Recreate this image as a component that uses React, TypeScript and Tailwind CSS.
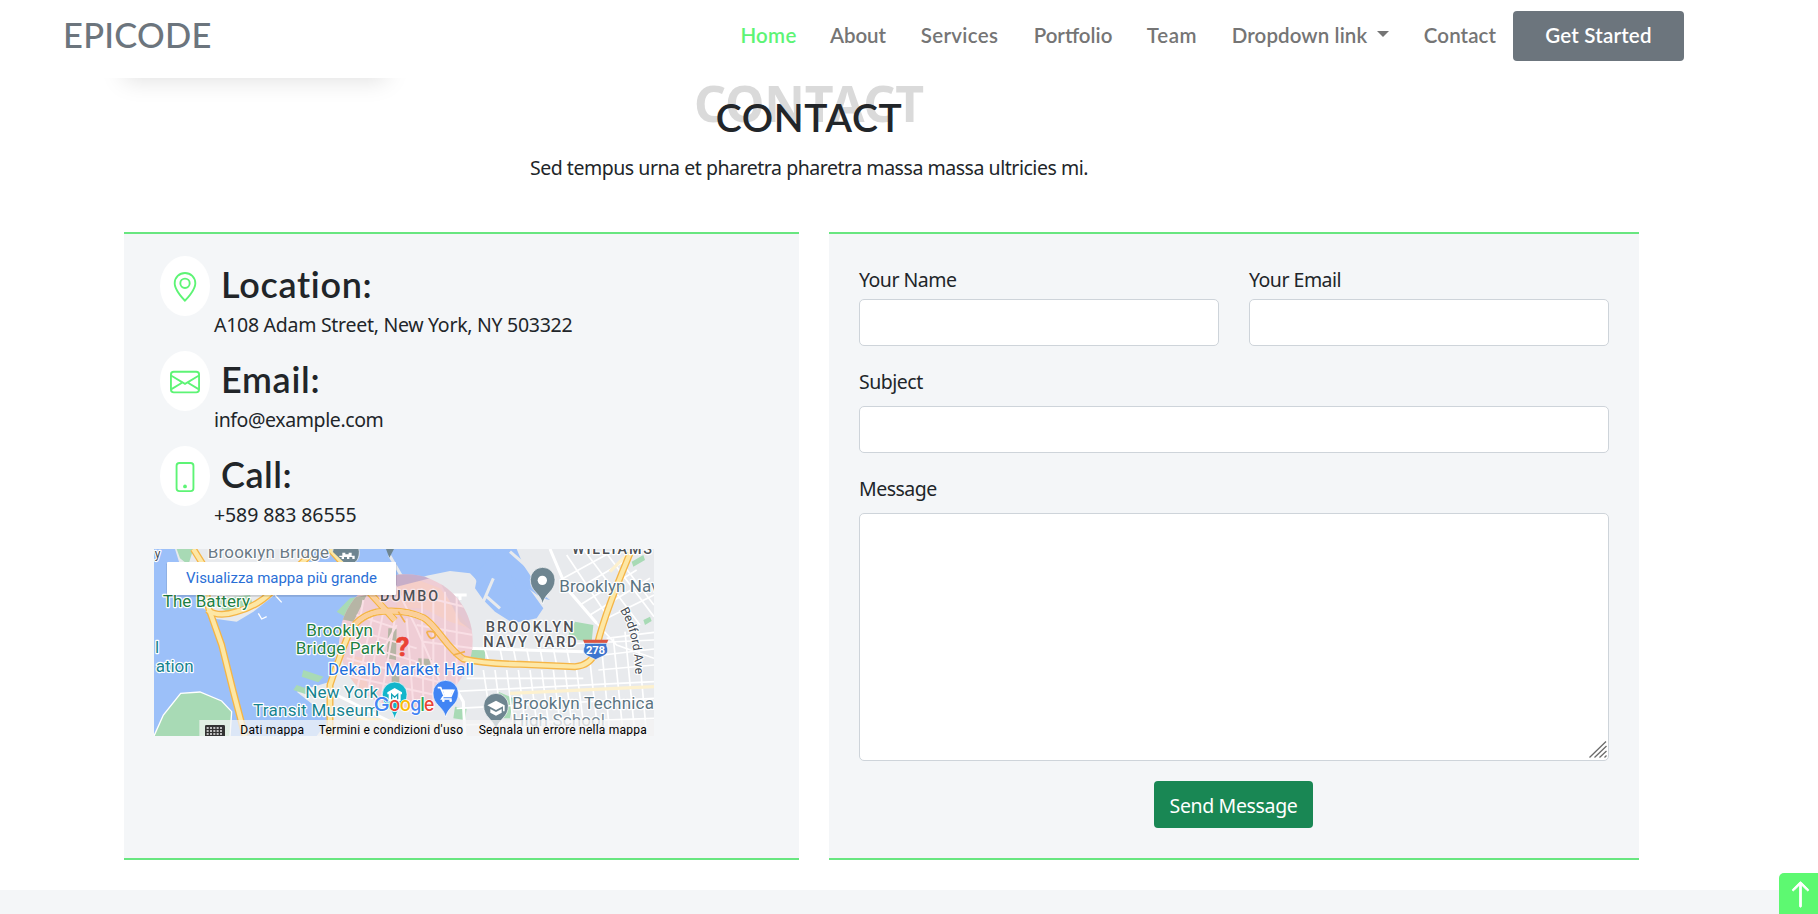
import { BsArrowUp, BsEnvelope, BsGeoAlt, BsPhone } from "react-icons/bs";
import type { IconType } from "react-icons";

const HEAD = "font-['Lato','Liberation_Sans',sans-serif]";
const GREEN_LINE = "border-y-2 border-[#68e680]";

const navItems = [
  { label: "Home", width: "w-[89px]", tracking: "tracking-[0.3px]", color: "text-[#5df475]" },
  { label: "About", width: "w-[90px]", tracking: "tracking-[-0.1px]", color: "text-[#757575]" },
  { label: "Services", width: "w-[113px]", tracking: "tracking-[0.3px]", color: "text-[#757575]" },
  { label: "Portfolio", width: "w-[114px]", tracking: "tracking-[0px]", color: "text-[#757575]" },
  { label: "Team", width: "w-[84px]", tracking: "tracking-[0.6px]", color: "text-[#757575]" },
  { label: "Dropdown link", width: "w-[193px]", tracking: "tracking-[0.1px]", color: "text-[#757575]", caret: true },
  { label: "Contact", width: "w-[106px]", tracking: "tracking-[0.1px]", color: "text-[#757575]" },
];

function Navbar() {
  return (
    <header className="relative z-10 flex h-[78px] items-start bg-white pl-[63px]">
      <a className={`${HEAD} w-[661px] pt-[10px] text-[34.5px] leading-[50px] font-medium tracking-[0.25px] text-[#6c757d]`}>EPICODE</a>
      <nav className={`${HEAD} flex pt-[11px] text-[20.5px] leading-[49px] font-semibold`}>
        {navItems.map((item) => (
          <a key={item.label} className={`flex justify-center whitespace-nowrap ${item.width} ${item.tracking} ${item.color}`}>
            {item.label}
            {item.caret && (
              <svg className="mt-[20px] ml-[10px] h-[6px] w-[12px]" viewBox="0 0 12 6">
                <path d="M0 0h12L6 6z" fill="#757575" />
              </svg>
            )}
          </a>
        ))}
        <button className="h-[50px] w-[171px] rounded-[4px] bg-[#6c757d] pb-px tracking-[0.2px] text-white">Get Started</button>
      </nav>
    </header>
  );
}

function SectionTitle() {
  return (
    <div className="relative mr-[200px] flex h-[154px] flex-col items-center overflow-hidden pt-[15px] text-[#212529]">
      <div className="absolute -top-[46px] left-[124px] h-10 w-[262px] shadow-[0_8px_24px_rgba(0,0,0,0.13)]" />
      <h2 className={`${HEAD} relative text-[39px] leading-[48px] font-semibold tracking-[0.6px]`}>
        CONTACT
        <span className="absolute top-[-14px] left-1/2 -translate-x-1/2 font-['Noto_Sans',sans-serif] text-[50px] leading-[48px] font-bold tracking-[-0.2px] text-[#333]/18">
          CONTACT
        </span>
      </h2>
      <p className="mt-[12px] text-[19.5px] leading-[30px] tracking-[-0.46px]">Sed tempus urna et pharetra pharetra massa massa ultricies mi.</p>
    </div>
  );
}

function InfoRow({ Icon, title, text, titleTracking, textTracking }: { Icon: IconType; title: string; text: string; titleTracking: string; textTracking: string }) {
  return (
    <div className="flex h-[95px]">
      <div className="flex h-[60px] w-[50px] items-center justify-center rounded-[50%] bg-white pt-[2px] text-[#5df475]">
        <Icon size={30} />
      </div>
      <div className="pl-1 text-[#212529]">
        <h4 className={`${HEAD} pt-[7px] pl-[7px] text-[36px] leading-[43px] font-semibold ${titleTracking}`}>{title}</h4>
        <p className={`mt-[4px] text-[19.5px] leading-[30px] ${textTracking}`}>{text}</p>
      </div>
    </div>
  );
}

function Label({ x, y, w, fill, children, size = 51, weight = 400, halo = "#ffffff" }: { x: number; y: number; w: number; fill: string; children: string; size?: number; weight?: number; halo?: string }) {
  return (
    <text x={x} y={y} textLength={w} fill={fill} fontSize={size} fontWeight={weight} stroke={halo} strokeWidth={7} strokeLinejoin="round" paintOrder="stroke">
      {children}
    </text>
  );
}

function Pin({ x, y, r, tip, fill }: { x: number; y: number; r: number; tip: number; fill: string }) {
  return <path fill={fill} stroke="#fff" strokeWidth={2} d={`M${x - r} ${y}a${r} ${r} 0 1 1 ${2 * r} 0c0 ${r} -${r - 8} ${r} -${r} ${tip - y}c-8 -${tip - y - r} -${r} -${tip - y - r} -${r} -${tip - y}z`} />;
}

const highways = [
  "M540 12L610 90L735 226",
  "M130 12L160 60L176 190L215 300L250 440L285 573",
  "M172 195Q205 218 260 200Q320 185 365 140L480 30",
  "M540 573L540 420Q570 330 595 270Q620 215 680 201Q760 190 820 218C860 240 890 310 940 342Q1000 356 1110 358L1275 365Q1320 362 1338 320Q1350 240 1440 25",
];

function StreetMap() {
  return (
    <svg className="block h-[187px] w-[500px]" viewBox="12 12 1500 561" fontFamily="Roboto, sans-serif">
      <rect x="12" y="12" width="1500" height="561" fill="#9cc0f9" />
      <path fill="#e8eaed" d="M740 110L770 115L830 92L900 78L960 85L980 105L975 130L1000 165L1035 200L1090 235L1160 220L1180 190L1130 120L1110 60L1090 12H1512V573H500L540 520L440 440L540 410L570 280L600 180L650 130z" />
      <path fill="#9cc0f9" d="M1060 12H1100L1120 60L1180 150L1200 165L1175 160L1080 90L1130 200L1110 210L1060 150L1090 220L1055 190L1010 165L970 90L1000 60z" />
      <path stroke="#e8eaed" strokeWidth="9" fill="none" d="M1080 20L1160 90M1120 12L1180 90M1010 155L1050 190M1030 100L1000 170M718 30L770 120" />
      <path fill="#e8eaed" d="M75 12H500L470 60L380 145L310 200L260 230L200 222L160 190L90 60z" />
      <path fill="#a8dab5" d="M12 573L40 510L92 445L150 441L215 468L245 500L240 573zM80 12L130 12L115 60L90 40zM170 165L300 150L310 185L240 205zM600 160L650 150L610 230L560 200zM460 375L520 395L505 412L455 395zM440 420L510 445L490 455L430 435zM1275 230L1330 240L1325 290L1250 280zM950 305L1005 310L1005 350L945 345zM1045 440L1090 460L1080 520L1045 520zM915 485L950 490L945 525L910 520zM1445 50L1480 30L1485 45L1450 65zM1480 225L1500 215L1505 228L1485 240z" />
      <path stroke="#fff" strokeWidth="4" fill="none" d="M12 573L40 510L92 445L150 441L215 468L245 500L240 573M325 205L335 222L350 215M375 150L395 172" />
      <g stroke="#fff" strokeWidth="5" fill="none">
        <path d="M1000 375L1030 573M1035 375L1060 573M1070 375L1095 573M1105 375L1130 573M1140 375L1165 573M1175 375L1200 573M1210 375L1235 573M1245 375L1270 573M1280 375L1305 573M1320 350L1345 573M1355 310L1380 573M1390 280L1420 573M1425 260L1455 573M1460 240L1490 573M1000 300L1020 360M1050 310L1060 360M1090 310L1100 360M1130 310L1140 360M1170 310L1180 360M1210 310L1220 360M1250 310L1260 360" />
        <path d="M900 440L1512 410M920 490L1512 460M950 400L1300 400M1370 280L1512 262M1360 330L1512 312M1345 375L1512 360M940 540L1512 520" />
        <path d="M1200 12L1250 130L1340 235L1400 300L1512 340M1240 100L1400 12M1260 145L1430 45M1290 180L1460 75M1320 210L1500 100M1360 225L1512 150M1300 12L1470 240M1360 12L1512 215M1250 30L1370 210M1420 60L1512 180M1180 300L1512 285" />
      </g>
      <path stroke="#fdf1cf" strokeWidth="10" fill="none" d="M1080 445L1512 425M1380 80L1440 20M620 520L900 540" />
      <path stroke="#fff" strokeWidth="9" fill="none" d="M760 130L820 250L900 400L940 470L945 573M950 310L1300 320M560 450L720 530L900 573M1200 12L1250 130L1340 235M895 150H950M930 150V165" />
      <clipPath id="district">
        <circle cx="768" cy="288" r="200" />
      </clipPath>
      <circle cx="768" cy="288" r="200" fill="#efcdd5" />
      <g clipPath="url(#district)">
        <path fill="#f8cfc2" opacity=".7" d="M740 80L870 130L960 250L900 230L820 190L740 190zM600 330L640 340L660 470L590 440z" />
        <path fill="#a899c8" opacity=".6" d="M680 80L860 80L840 100L740 125z" />
        <path fill="#b6b5a5" d="M600 160L650 150L610 230L560 220zM715 250L740 250L738 345L710 340zM725 385L748 385L748 440L725 430zM805 340L845 342L840 362L805 360z" />
        <path fill="#dcc3d0" d="M860 90L960 150L970 260L930 230z" opacity=".6" />
        <path stroke="#f9dfe5" strokeWidth="6" fill="none" d="M640 165L600 400M670 200L620 440M700 200L650 460M735 220L690 480M770 220L790 480M815 130L820 480M850 130L850 480M885 140L885 480M920 150L920 480M620 210L740 250M600 250L800 310M600 290L800 350M590 340L900 420M800 150L960 190M800 240L970 270M820 290L970 310M580 390L900 460M720 90L800 250L900 480M740 240L690 330" />
      </g>
      <g fill="none" strokeLinejoin="round">
        {highways.map((d) => <path key={d} d={d} stroke="#f5b546" strokeWidth="21" />)}
        {highways.map((d) => <path key={d} d={d} stroke="#fde7a5" strokeWidth="13" />)}
        <path d="M610 90L735 226M597 265Q620 215 680 201Q760 190 820 218C860 240 890 310 940 342" stroke="#fbcf9c" strokeWidth="13" />
        <path d="M830 260Q860 255 855 275Q840 290 830 260M745 200L765 232M910 330L945 320" stroke="#f3b04d" strokeWidth="5" />
      </g>
      <Pin x={588} y={20} r={40} tip={58} fill="#6e8590" />
      <path d="M708 12H732L718 38z" fill="#6e8590" />
      <path d="M568 32h9v-9h9v5h10v-5h9v9h9v10h-7v-6h-9v6h-7v-6h-9v6h-7v-6h-7z" fill="#fff" />
      <Label x={173} y={40} w={364} fill="#6b7a86">Brooklyn Bridge</Label>
      <Label x={14} y={38} w={10} fill="#454c55" size={36}>y</Label>
      <Label x={1266} y={28} w={240} fill="#4d5156" size={43} weight={500}>WILLIAMS</Label>
      <Label x={38} y={185} w={262} fill="#1f8043">The Battery</Label>
      <Label x={690} y={167} w={174} fill="#4d5156" size={43} weight={500} halo="#f7e5e8">DUMBO</Label>
      <Label x={469} y={273} w={200} fill="#1f8043">Brooklyn</Label>
      <Label x={437} y={327} w={267} fill="#1f8043">Bridge Park</Label>
      <Label x={15} y={325} w={11} fill="#16838f">l</Label>
      <Label x={17} y={380} w={114} fill="#16838f">ation</Label>
      <Label x={1007} y={262} w={264} fill="#4d5156" size={44} weight={500}>BROOKLYN</Label>
      <Label x={1000} y={307} w={280} fill="#4d5156" size={44} weight={500}>NAVY YARD</Label>
      <Label x={534} y={390} w={438} fill="#1f6fdc">Dekalb Market Hall</Label>
      <Label x={466} y={460} w={218} fill="#16838f">New York</Label>
      <Label x={309} y={513} w={378} fill="#16838f">Transit Museum</Label>
      <Label x={1228} y={140} w={300} fill="#5b7482">Brooklyn Nav</Label>
      <Label x={1087} y={491} w={425} fill="#5b7482">Brooklyn Technica</Label>
      <Label x={1087} y={544} w={278} fill="#7e8f9b">High School</Label>
      <text x="738" y="334" fill="#ea4335" stroke="#ea4335" strokeWidth="2" fontSize="80" fontWeight="700">?</text>
      <path id="bedford" d="M1410 195Q1455 270 1456 400" fill="none" />
      <text fontSize="37" fill="#454c55" stroke="#fff" strokeWidth="6" paintOrder="stroke">
        <textPath href="#bedford">Bedford Ave</textPath>
      </text>
      <Pin x={1178} y={104} r={37} tip={177} fill="#6e8590" />
      <circle cx="1177" cy="106" r="14" fill="#fff" />
      <Pin x={1038} y={482} r={37} tip={556} fill="#6e8590" />
      <path fill="#fff" d="M1012 481l26-14 26 14v18h-5v-15l-21 11zM1021 492v11l17 9 17-9v-11l-17 9z" />
      <Pin x={734} y={448} r={37} tip={522} fill="#12b5cb" />
      <path d="M734 429l22 13v6h-4v20h-36v-20h-4v-6z" fill="#fff" />
      <path d="M725 463v-15l9 9 9-9v15" stroke="#12a4b8" strokeWidth="4" fill="none" />
      <Pin x={887} y={444} r={38} tip={516} fill="#4285f4" />
      <path d="M863 428h9l11 26h20l8-18H878M880 454l-5 8h30" stroke="#fff" strokeWidth="5" fill="none" />
      <path d="M878 434h31l-7 19h-18z" fill="#fff" />
      <circle cx="880" cy="467" r="4" fill="#fff" />
      <circle cx="902" cy="467" r="4" fill="#fff" />
      <path d="M1299 284h76l-4 10h-68z" fill="#d95543" />
      <path d="M1303 295h68c-4 9 4 12 2 24c-2 12-18 15-36 25c-18-10-34-13-36-25c-2-12 6-15 2-24z" fill="#3d76cf" stroke="#fff" strokeWidth="2" />
      <text x="1308" y="328" textLength="57" fill="#fff" fontSize="34" fontWeight="700">278</text>
      <g fontFamily="Inter, sans-serif" fontSize="57" fontWeight="500" stroke="#fff" strokeWidth="5" paintOrder="stroke">
        <text x="671" y="499" fill="#4285f4" textLength="48" lengthAdjust="spacingAndGlyphs">G</text>
        <text x="717" y="499" fill="#ea4335" textLength="34" lengthAdjust="spacingAndGlyphs">o</text>
        <text x="749" y="499" fill="#fbbc05" textLength="34" lengthAdjust="spacingAndGlyphs">o</text>
        <text x="781" y="499" fill="#4285f4" textLength="33" lengthAdjust="spacingAndGlyphs">g</text>
        <text x="811" y="499" fill="#34a853" textLength="14" lengthAdjust="spacingAndGlyphs">l</text>
        <text x="822" y="499" fill="#ea4335" textLength="31" lengthAdjust="spacingAndGlyphs">e</text>
      </g>
      <rect x="148" y="525" width="1364" height="48" fill="#f5f5f5" opacity=".72" />
      <rect x="165" y="540" width="60" height="40" rx="4" fill="#333" />
      <path d="M170 549h50M170 558h50M170 567h50" stroke="#eee" strokeWidth="5" strokeDasharray="6 4" />
      <g fill="#000" fontSize="36">
        <text x="271" y="566" textLength="191">Dati mappa</text>
        <text x="506" y="566" textLength="433">Termini e condizioni d'uso</text>
        <text x="986" y="566" textLength="504">Segnala un errore nella mappa</text>
      </g>
      <rect x="49" y="54" width="691" height="101" fill="#000" opacity=".12" rx="4" />
      <rect x="51" y="51" width="687" height="99" fill="#fff" rx="3" />
      <text x="108" y="115" textLength="573" fontSize="45" fill="#2a6fd6">Visualizza mappa più grande</text>
    </svg>
  );
}

function ContactInfo() {
  return (
    <div className={`h-[628px] w-[675px] bg-[#f4f6f8] pt-[22px] pl-[30px] ${GREEN_LINE}`}>
      <div className="pl-[6px]">
        <InfoRow Icon={BsGeoAlt} title="Location:" text="A108 Adam Street, New York, NY 503322" titleTracking="tracking-[0.7px]" textTracking="tracking-[-0.28px]" />
        <InfoRow Icon={BsEnvelope} title="Email:" text="info@example.com" titleTracking="tracking-[0.7px]" textTracking="tracking-[-0.4px]" />
        <InfoRow Icon={BsPhone} title="Call:" text="+589 883 86555" titleTracking="tracking-[0.5px]" textTracking="tracking-[-0.1px]" />
      </div>
      <div className="mt-[8px]">
        <StreetMap />
      </div>
    </div>
  );
}

const FIELD = "block w-full rounded-[5px] border border-[#ced4da] bg-white outline-none";
const LABEL = "block pt-px text-[19.5px] leading-[30px] tracking-[-0.5px] text-[#212529]";

function ContactForm() {
  return (
    <form className={`h-[628px] w-[810px] bg-[#f4f6f8] px-[30px] pt-[30px] ${GREEN_LINE}`}>
      <div className="grid grid-cols-2 gap-[30px]">
        <div>
          <label className={LABEL}>Your Name</label>
          <input className={`${FIELD} mt-[4px] h-[47px]`} />
        </div>
        <div>
          <label className={LABEL}>Your Email</label>
          <input className={`${FIELD} mt-[4px] h-[47px]`} />
        </div>
      </div>
      <label className={`${LABEL} mt-5`}>Subject</label>
      <input className={`${FIELD} mt-[9px] h-[47px]`} />
      <label className={`${LABEL} mt-5`}>Message</label>
      <div className="relative mt-[9px]">
        <textarea className={`${FIELD} h-[248px] resize-none`} />
        <svg className="absolute right-[2px] bottom-[3px] h-[17px] w-[18px]" viewBox="0 0 18 17" stroke="#6b6b6b" strokeWidth="1.3">
          <path d="M0.5 16.5L17 0.5M5.5 16.5L17.5 5M10.5 16.5L17.5 10M15.5 16.5L17.5 14.5" />
        </svg>
      </div>
      <button type="button" className="mt-5 ml-[295px] block h-[47px] w-[159px] rounded-[4px] bg-[#198754] pt-[2px] text-[19.5px] tracking-[-0.35px] text-white">
        Send Message
      </button>
    </form>
  );
}

export default function App() {
  return (
    <div className="relative h-[914px] w-[1818px] overflow-hidden bg-white font-['Noto_Sans',sans-serif]">
      <Navbar />
      <SectionTitle />
      <main className="flex gap-[30px] pl-[124px]">
        <ContactInfo />
        <ContactForm />
      </main>
      <footer className="mt-[30px] h-6 bg-[#f4f6f8]" />
      <button className="absolute top-[873px] right-0 flex h-[46px] w-[39px] items-start justify-center rounded-tl-[5px] bg-[#5df971] pt-[7px] pl-[4px] text-white">
        <BsArrowUp size={29} stroke="currentColor" strokeWidth={0.5} />
      </button>
    </div>
  );
}
